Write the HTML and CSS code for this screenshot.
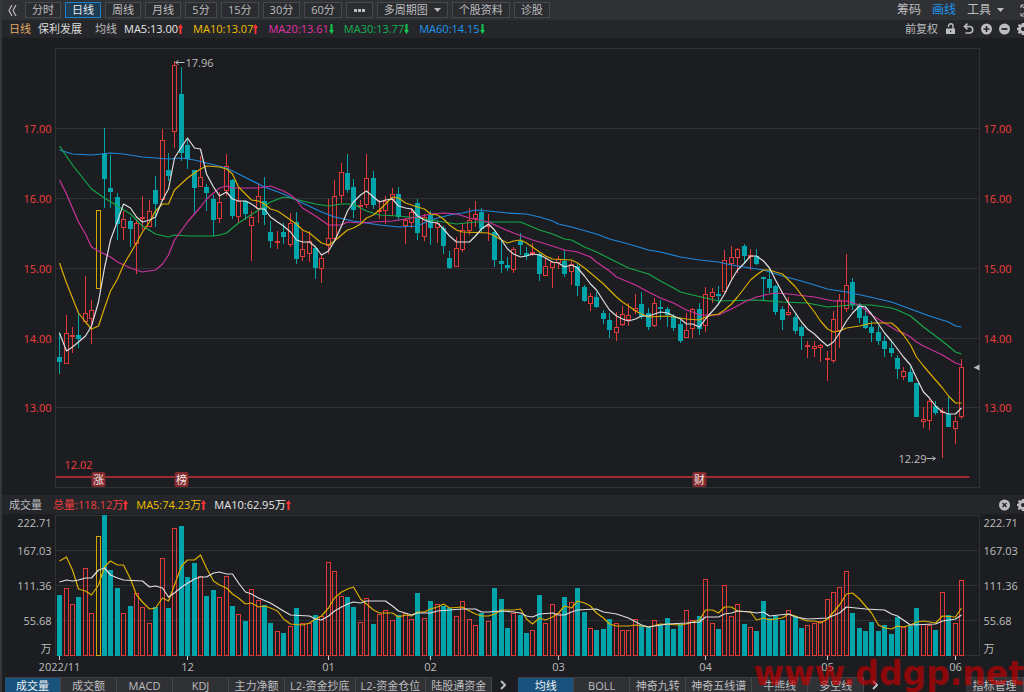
FILE: index.html
```html
<!DOCTYPE html>
<html lang="zh-CN">
<head>
    <meta charset="UTF-8">
    <meta name="viewport" content="width=device-width, initial-scale=1.0">
    <title>保利发展 日线</title>
    <link rel="stylesheet" href="styles.css">
</head>
<body>
    <svg class="sprite" aria-hidden="true">
        <symbol id="up" viewBox="0 0 5 10"><path d="M2.5 0L5 4H3.5V10H1.5V4H0z"/></symbol>
        <symbol id="down" viewBox="0 0 5 10"><path d="M2.5 10L5 6H3.5V0H1.5V6H0z"/></symbol>
        <symbol id="caret" viewBox="0 0 7 4"><path d="M0 0h7L3.5 4z"/></symbol>
        <symbol id="gear" viewBox="0 0 12 12"><path fill-rule="evenodd" d="M5 0h2l.4 1.6 1.1.5L10 1.200l1.200 1.300-.8 1.400.4 1.100L12 5v2l-1.400.4-.5 1.100.9 1.500-1.300 1.200-1.500-.8-.9.300L7 12H5l-.4-1.500-1.100-.4-1.500.8L.8 9.700l.8-1.400L1.300 7.300 0 7V5l1.500-.4.4-1L1 2.200 2.300.9l1.400.9.9-.3zM6 4a2 2 0 1 0 0 4 2 2 0 1 0 0-4z"/></symbol>
        <symbol id="next" viewBox="0 0 6 10"><path d="M1 1l4 4-4 4" fill="none" stroke="currentColor" stroke-width="2"/></symbol>
    </svg>

    <main class="app">
        <nav class="toolbar">
            <button class="plain" aria-label="收起"><svg width="9" height="11" viewBox="0 0 9 11"><path d="M4 0L1 5.500l3 5.500M8 0L5 5.500l3 5.500" fill="none" stroke="currentColor" stroke-width="1.200"/></svg></button>
            <button class="period">分时</button>
            <button class="period active">日线</button>
            <button class="period">周线</button>
            <button class="period">月线</button>
            <button class="period">5分</button>
            <button class="period">15分</button>
            <button class="period">30分</button>
            <button class="period">60分</button>
            <button class="period more" aria-label="更多"><svg width="13" height="3" viewBox="0 0 13 3"><path d="M1 0h3v3H1zM5 0h3v3H5zM9 0h3v3H9z"/></svg></button>
            <button class="period">多周期图 <svg class="caret" width="7" height="4"><use href="#caret"/></svg></button>
            <button class="period">个股资料</button>
            <button class="period">诊股</button>
            <div class="tools">
                <button class="plain">筹码</button>
                <button class="plain blue">画线</button>
                <button class="plain">工具 <svg class="caret" width="7" height="4"><use href="#caret"/></svg></button>
                <button class="plain" aria-label="全屏"><svg width="12" height="13" viewBox="0 0 12 13"><path d="M1 4V1h3M1 1l3 3M8 1h3v3M1 9v3h3M1 12l3-3M11 9v3H8" fill="none" stroke="currentColor"/></svg></button>
            </div>
        </nav>

        <header class="info">
            <span class="orange">日线</span>
            <span class="name">保利发展</span>
            <span class="label">均线</span>
            <span class="value white">MA5:13.00<svg class="arrow up"><use href="#up"/></svg></span>
            <span class="value yellow">MA10:13.07<svg class="arrow up"><use href="#up"/></svg></span>
            <span class="value magenta">MA20:13.61<svg class="arrow down"><use href="#down"/></svg></span>
            <span class="value green">MA30:13.77<svg class="arrow down"><use href="#down"/></svg></span>
            <span class="value blue">MA60:14.15<svg class="arrow down"><use href="#down"/></svg></span>
            <div class="actions">
                <button class="plain">前复权</button>
                <button class="plain" aria-label="锁定"><svg width="11" height="12" viewBox="0 0 11 12"><path d="M1 5.500h9V11H1z"/><path d="M3.500 4V3a2.200 2.200 0 0 1 4.500 0v3" fill="none" stroke="currentColor" stroke-width="1.400"/><path d="M5 7.500h1.200v1.500H5z" fill="#25262a"/></svg></button>
                <button class="plain" aria-label="撤销"><svg width="11" height="12" viewBox="0 0 11 12"><path d="M1.500 3.500H7a3.300 3.300 0 0 1 0 6.500H2.500M4.500 .7L1.500 3.500l3 2.800" fill="none" stroke="currentColor" stroke-width="1.600"/></svg></button>
                <button class="plain" aria-label="放大"><svg width="11" height="12" viewBox="0 0 11 12"><circle cx="5.500" cy="6" r="5.500"/><path d="M2.500 6h6M5.500 3v6" stroke="#25262a" stroke-width="1.600"/></svg></button>
                <button class="plain" aria-label="缩小"><svg width="11" height="12" viewBox="0 0 11 12"><circle cx="5.500" cy="6" r="5.500"/><path d="M2.500 6h6" stroke="#25262a" stroke-width="1.800"/></svg></button>
                <button class="plain" aria-label="设置"><svg width="12" height="12"><use href="#gear"/></svg></button>
            </div>
        </header>

        <svg id="price-chart" class="chart price-chart" role="img" aria-label="日线K线图"></svg>

        <header class="info volume-info">
            <span class="label">成交量</span>
            <span class="value red">总量:118.12万<svg class="arrow up"><use href="#up"/></svg></span>
            <span class="value yellow">MA5:74.23万<svg class="arrow up"><use href="#up"/></svg></span>
            <span class="value white">MA10:62.95万<svg class="arrow up"><use href="#up"/></svg></span>
            <div class="actions">
                <button class="plain" aria-label="关闭"><svg width="11" height="12" viewBox="0 0 11 12"><circle cx="5.500" cy="6" r="5.500"/><path d="M3.500 4l4 4M7.500 4l-4 4" stroke="#25262a" stroke-width="1.500"/></svg></button>
                <button class="plain" aria-label="设置"><svg width="12" height="12"><use href="#gear"/></svg></button>
            </div>
        </header>

        <svg id="volume-chart" class="chart volume-chart" role="img" aria-label="成交量"></svg>

        <footer class="tabs">
            <div class="tab-group">
                <button class="tab active">成交量</button>
                <button class="tab">成交额</button>
                <button class="tab">MACD</button>
                <button class="tab">KDJ</button>
                <button class="tab">主力净额</button>
                <button class="tab">L2-资金抄底</button>
                <button class="tab">L2-资金仓位</button>
                <button class="tab">陆股通资金</button>
            </div>
            <button class="plain next" aria-label="更多指标"><svg width="6" height="10"><use href="#next"/></svg></button>
            <div class="tab-group">
                <button class="tab active">均线</button>
                <button class="tab">BOLL</button>
                <button class="tab">神奇九转</button>
                <button class="tab">神奇五线谱</button>
                <button class="tab">牛熊线</button>
                <button class="tab">多空线</button>
            </div>
            <button class="plain next" aria-label="更多均线"><svg width="6" height="10"><use href="#next"/></svg></button>
            <button class="tab manage">指标管理</button>
        </footer>
        <div class="watermark">www.ddgp.net</div>
    </main>

    <script src="chart.js"></script>
</body>
</html>
```

FILE: styles.css
```css
* {
    box-sizing: border-box;
}

body {
    margin: 0;
    height: 100vh;
    overflow: hidden;
    background: #1c1d20;
    color: #bcbdbf;
    font-family: "Open Sans", "Noto Sans CJK SC", sans-serif;
    font-size: 11px;
    line-height: 16px;
}

button {
    font: inherit;
    color: inherit;
    background: none;
    border: none;
    padding: 0;
    white-space: nowrap;
    cursor: pointer;
}

svg {
    fill: currentColor;
}

.sprite {
    display: none;
}

.app {
    position: relative;
    height: 100%;
    overflow: hidden;
    border-left: 2px solid #36373a;
    display: flex;
    flex-direction: column;
}

.toolbar {
    display: flex;
    align-items: center;
    gap: 4px;
    height: 20px;
    padding-left: 6px;
    background: #303135;
    flex-shrink: 0;
}

.toolbar > .plain {
    width: 13px;
    display: flex;
}

.period {
    display: flex;
    align-items: center;
    justify-content: center;
    min-width: 32px;
    height: 16px;
    padding: 0 6px;
    line-height: 14px;
    border: 1px solid #47484b;
    background: #2b2c30;
}

.period.more {
    min-width: 27px;
}

.period.active {
    color: #e6e8ea;
    background: #1e3d54;
    border-color: #1c80c9;
}

.caret {
    margin-left: 6px;
}

.tools {
    display: flex;
    align-items: center;
    gap: 11px;
    margin-left: auto;
    margin-right: -8px;
    font-size: 12px;
}

.tools .plain {
    display: flex;
    align-items: center;
}

.tools .plain:last-child {
    margin-left: 5px;
}

.info {
    display: flex;
    align-items: center;
    gap: 7px;
    height: 18px;
    padding-left: 7px;
    background: #25262a;
    white-space: nowrap;
    flex-shrink: 0;
}

.name {
    color: #dcddde;
    margin-right: 6px;
}

.value + .value {
    margin-left: 3px;
}

.orange { color: #e0a868; }
.white { color: #e8e8e8; }
.yellow { color: #eec000; }
.magenta { color: #e032a6; }
.green { color: #12b450; }
.blue { color: #1d96ee; }
.red { color: #f03e3e; }

.arrow {
    width: 5px;
    height: 10px;
    vertical-align: -1px;
}

.arrow.up {
    color: #ff3434;
}

.arrow.down {
    color: #14c850;
}

.actions {
    display: flex;
    align-items: center;
    gap: 7px;
    margin-left: auto;
    margin-right: -5px;
}

.actions .plain {
    display: flex;
}

.volume-info {
    height: 19px;
}

.volume-info .label {
    margin-right: 4px;
}

.volume-info .value + .value {
    margin-left: 1px;
}

.chart {
    display: block;
    width: 100%;
    flex-shrink: 0;
}

.price-chart {
    height: 457px;
}

.volume-chart {
    height: 163px;
}

.frame {
    fill: none;
    stroke: #303135;
}

.grid {
    stroke: #303135;
}

.candle {
    stroke-width: 1;
    shape-rendering: crispEdges;
}

.candle.rise {
    fill: none;
    stroke: #e23a3a;
}

.candle.fall {
    fill: #00a5ab;
    stroke: #00a5ab;
}

.candle.mark {
    fill: none;
    stroke: #d3a900;
}

.average {
    fill: none;
    stroke-width: 1.2;
    stroke-linejoin: round;
}

.average.white { stroke: #dedede; }
.average.yellow { stroke: #d9ae00; }
.average.magenta { stroke: #cb329b; }
.average.green { stroke: #16a84a; }
.average.blue { stroke: #1f88dc; }

.chart text {
    fill: #bcbdbf;
}

.chart .price-label {
    fill: #f43e3e;
}

.leader {
    fill: none;
    stroke: #b4b5b7;
}

.event-line {
    stroke: #9c2d30;
    stroke-width: 2;
}

.event {
    fill: #842a2e;
}

.chart .event-text {
    fill: #f0e6e6;
}

.tick {
    stroke: #d0d0d0;
}

.tabs {
    display: flex;
    height: 18px;
    padding-left: 3px;
    flex-shrink: 0;
}

.tab-group {
    display: flex;
}

.tab {
    min-width: 56px;
    height: 18px;
    padding: 0 5px 2px;
    background: #303135;
    border-top: 1px solid #3d3e42;
    border-right: 1px solid #47484b;
}

.tab.active {
    color: #f0f2f4;
    background: #18527d;
}

.next {
    display: flex;
    justify-content: center;
    width: 26px;
    padding: 3px 4px 0 0;
}

.manage {
    width: 58px;
    margin-left: auto;
}

.watermark {
    position: absolute;
    right: 0;
    bottom: -1px;
    color: rgba(200, 0, 0, 0.66);
    font: bold 33px/38px "DejaVu Sans", sans-serif;
    pointer-events: none;
}
```

FILE: chart.js
```js
// One row per day: type (r = rise, f = fall, m = marked), high, body top, body bottom, low, volume top
const days = [
    ['f',332,357,362,374,595], ['r',315,333,364,364,588], ['r',327,335,337,353,604], ['f',314,335,339,348,597],
    ['r',276,313,322,322,568], ['r',300,310,319,344,613], ['m',210,210,289,289,536], ['f',128,154,179,208,515],
    ['f',155,188,192,208,570], ['f',193,197,224,240,588], ['r',211,219,228,240,613], ['f',217,221,229,247,606],
    ['r',220,223,244,274,593], ['r',196,217,219,230,607], ['r',200,211,227,227,623], ['f',176,190,204,227,607],
    ['r',129,140,200,200,558], ['f',153,170,176,181,608], ['r',61,65,132,148,528], ['f',67,94,153,161,526],
    ['f',138,145,159,169,577], ['f',170,170,188,215,563], ['r',156,177,187,187,576], ['f',184,187,193,211,596],
    ['f',195,199,220,236,590], ['r',192,202,219,223,597], ['r',154,166,191,196,576], ['f',179,180,216,219,606],
    ['r',188,201,217,223,614], ['f',200,201,214,220,621], ['r',211,217,226,261,589], ['r',183,196,209,223,600],
    ['f',177,201,215,225,605], ['f',221,232,241,248,623], ['r',231,241,243,249,631], ['f',223,232,237,244,633],
    ['r',213,223,245,247,626], ['f',212,222,259,264,608], ['r',231,249,257,261,623], ['r',231,241,254,262,623],
    ['f',246,248,268,279,615], ['r',254,258,269,283,616], ['r',199,238,246,254,562], ['r',180,196,239,240,571],
    ['r',163,172,196,203,596], ['f',154,173,190,193,597], ['f',179,187,210,218,607], ['r',200,205,207,223,622],
    ['r',154,178,205,208,598], ['f',171,178,205,209,624], ['r',200,210,212,219,614], ['r',196,201,211,224,610],
    ['r',188,194,200,216,620], ['f',187,194,217,220,615], ['r',218,220,226,244,613], ['r',208,212,223,228,619],
    ['f',199,203,233,240,593], ['r',214,217,237,241,618], ['f',211,215,228,245,601], ['r',221,223,228,243,604],
    ['f',226,228,246,254,606], ['f',251,258,268,269,608], ['r',237,248,267,267,616], ['r',223,230,250,252,601],
    ['r',208,220,231,235,619], ['r',201,214,219,227,625], ['f',208,212,229,233,613], ['r',214,225,227,241,621],
    ['f',230,232,260,267,588], ['f',240,261,264,273,599], ['f',257,265,268,271,628], ['r',247,249,270,273,613],
    ['f',233,241,245,255,615], ['f',247,253,256,260,633], ['r',243,252,254,256,630], ['f',253,254,274,281,595],
    ['r',258,266,276,276,623], ['r',261,262,268,288,604], ['r',256,259,263,269,613], ['f',250,261,274,277,597],
    ['r',261,264,272,285,602], ['f',264,266,286,296,588], ['f',285,287,301,302,612], ['r',293,296,304,311,628],
    ['f',292,297,307,308,630], ['f',310,313,319,324,629], ['f',313,320,330,338,619], ['r',312,327,333,341,623],
    ['r',306,314,325,326,630], ['r',303,315,320,326,630], ['r',294,308,311,314,619], ['f',292,304,317,319,626],
    ['f',308,313,327,330,627], ['r',298,303,326,327,620], ['f',300,307,309,320,625], ['f',307,309,315,327,618],
    ['f',314,317,328,331,629], ['f',320,324,341,343,624], ['r',313,330,338,338,610], ['r',308,309,329,338,620],
    ['f',303,309,329,335,616], ['r',287,294,326,332,579], ['r',288,292,297,303,623], ['f',286,294,296,303,629],
    ['r',250,260,292,292,585], ['r',246,257,264,279,616], ['r',248,249,258,273,604], ['f',244,246,256,264,624],
    ['r',249,255,257,270,627], ['f',249,256,264,265,631], ['f',277,277,279,301,601], ['f',268,279,288,293,618],
    ['f',285,286,312,315,616], ['f',306,309,320,330,620], ['r',297,312,315,316,610], ['f',313,317,331,334,617],
    ['f',325,327,336,350,628], ['r',341,345,347,358,625], ['r',341,346,349,357,623], ['r',344,345,348,362,621],
    ['r',351,358,360,381,599], ['r',311,319,361,363,592], ['r',294,300,331,348,587], ['r',254,285,309,312,571],
    ['f',278,282,305,310,613], ['f',303,304,318,323,628], ['f',306,316,328,329,631], ['f',321,327,333,342,622],
    ['f',326,332,341,345,631], ['f',336,341,349,357,625], ['f',341,348,353,357,634], ['f',355,358,369,379,617],
    ['r',367,371,377,380,627], ['f',366,372,382,382,626], ['f',383,383,417,417,608], ['r',407,419,422,428,624],
    ['r',399,401,421,430,625], ['f',401,406,413,415,630], ['r',408,411,413,458,592], ['f',397,414,427,427,615],
    ['r',416,421,429,444,623], ['r',359,367,417,419,580]
];

// Averages as "day:y" points
const priceAverages = {
    blue: '0:150 2:154 5:155 8:153 10:154 13:157 17:159 19:158 21:160 23:163 26:168 28:174 32:187 35:194 38:203 41:212 43:217 46:221 50:225 53:227 56:226 58:220 61:215 63:213 65:210 67:211 70:213 73:214 75:217 77:221 78:224 80:227 84:234 86:239 89:244 92:250 94:252 97:257 100:260 103:262 105:265 108:268 110:270 113:276 116:281 120:289 123:292 126:296 130:302 133:309 136:316 139:322 140:326 141:327',
    green: '0:146 2:165 5:189 7:198 9:206 11:214 13:226 15:234 17:237 18:235 20:236 24:236 25:235 26:233 28:223 31:210 33:202 35:197 36:198 38:201 40:204 42:206 44:204 46:204 47:208 48:211 50:215 53:216 56:218 60:222 62:224 65:222 72:222 74:227 75:230 77:234 79:239 80:240 82:247 84:252 87:262 89:268 92:274 94:281 96:288 97:292 99:295 101:298 103:301 109:300 113:302 117:303 120:307 124:305 127:305 130:308 131:310 133:316 135:327 137:336 139:346 140:352 141:354',
    magenta: '0:180 1:194 2:208 3:222 4:234 5:247 6:251 8:257 9:262 11:268 13:272 15:270 16:264 17:255 18:240 20:222 22:207 23:199 25:188 26:186 27:188 31:188 33:186 35:191 36:195 37:200 38:208 40:216 42:225 44:225 45:222 47:223 49:222 52:221 54:219 56:217 58:214 60:213 62:214 64:218 67:222 69:228 71:233 74:240 75:242 78:248 79:250 81:252 83:257 84:262 86:271 87:277 90:285 92:292 94:298 96:303 98:310 99:312 100:315 103:315 105:309 107:302 109:297 111:294 112:293 114:294 118:297 121:301 123:301 125:305 127:315 129:323 131:331 132:333 133:337 134:342 135:346 138:355 140:363 141:365',
    yellow: '0:263 1:283 2:298 3:313 4:322 5:329 6:326 7:308 8:291 9:279 10:265 12:243 13:232 14:222 15:211 16:204 17:204 18:190 20:178 22:169 23:166 25:167 26:169 27:174 28:187 29:194 30:200 31:201 32:204 33:209 34:211 35:215 36:220 37:224 38:230 39:233 40:238 41:243 42:245 43:241 44:235 45:230 46:228 47:224 48:218 49:215 50:210 51:204 52:197 53:198 54:203 55:205 56:207 57:209 58:214 59:215 60:219 61:225 62:230 63:232 67:233 68:236 69:240 70:243 71:241 72:240 73:243 74:247 75:252 76:256 77:259 80:260 81:263 82:268 83:273 84:278 85:284 86:290 87:297 88:302 89:306 90:311 91:314 92:317 95:316 98:319 100:320 101:317 102:315 103:314 104:310 105:304 106:297 107:288 108:280 109:275 110:270 111:270 112:272 113:274 114:280 115:287 116:295 117:303 118:312 119:321 120:329 121:332 122:331 123:328 125:326 127:323 130:323 131:328 132:335 133:345 134:357 135:366 136:373 138:388 139:396 140:403 141:403',
    white: '0:333 1:351 2:347 3:342 4:336 5:326 6:302 7:268 8:240 9:221 10:204 11:208 12:217 13:222 14:220 15:217 16:200 17:189 18:158 19:147 20:138 21:148 22:149 23:174 24:187 25:196 26:192 27:199 28:201 29:201 30:204 31:209 32:209 33:217 34:222 35:226 36:232 37:240 38:242 39:242 40:247 41:255 42:251 43:241 44:226 45:211 46:202 47:195 48:191 49:197 50:202 51:200 52:199 53:206 54:208 55:209 56:216 57:220 58:222 59:223 60:229 61:236 62:242 64:242 65:236 66:229 67:224 68:230 69:240 70:249 71:254 72:257 73:256 74:254 75:255 76:258 77:262 78:263 79:267 80:265 81:268 82:276 83:284 84:290 85:301 86:310 87:316 88:319 89:321 90:319 91:316 92:316 93:314 94:312 95:313 96:316 97:319 98:324 99:324 100:327 101:319 102:311 103:304 104:294 105:280 106:270 107:263 108:256 109:256 110:261 111:268 112:280 113:293 114:303 115:313 116:322 117:329 118:334 119:340 120:346 121:342 122:333 123:321 124:313 125:306 126:307 127:314 128:324 129:333 130:341 131:349 132:357 133:365 134:378 135:392 136:398 137:406 138:412 139:414 140:414 141:408'
};

const volumeAverages = {
    yellow: '0:561 1:557 2:570 3:589 4:591 5:595 6:585 7:567 8:561 9:565 10:565 11:579 12:595 13:602 14:609 15:608 16:598 17:601 18:585 19:566 20:560 21:560 22:555 23:568 24:581 25:585 26:588 27:594 28:598 29:604 30:603 31:607 32:606 33:608 34:611 35:619 36:624 38:625 39:623 40:619 41:616 42:608 43:598 44:592 45:589 46:587 47:599 48:604 49:610 50:613 52:613 53:617 54:615 55:616 56:612 57:612 58:609 59:607 60:604 61:608 63:607 64:611 65:614 66:616 67:616 68:614 69:610 71:610 72:609 73:619 74:624 75:618 76:620 77:617 78:613 79:606 80:608 81:601 82:603 83:606 84:613 85:618 86:624 87:626 89:626 90:625 92:627 94:624 97:625 98:624 99:622 100:620 101:610 102:610 103:613 104:607 105:607 106:611 108:612 109:620 110:618 111:620 112:619 113:618 114:614 115:616 116:619 117:621 118:621 119:623 120:619 121:612 122:605 123:594 124:593 125:599 126:606 127:613 128:625 129:628 130:629 131:626 132:627 133:625 134:622 135:621 137:623 138:616 140:617 141:608',
    white: '0:582 1:580 2:581 3:580 4:578 5:578 6:570 7:568 8:575 9:578 10:580 13:581 14:587 15:586 16:588 17:597 18:593 19:587 21:579 22:577 23:577 24:573 25:572 26:574 27:574 28:583 29:592 30:594 31:598 33:603 35:611 36:615 39:616 40:619 41:620 42:616 43:611 44:607 45:604 46:602 47:603 48:601 51:601 52:606 53:611 55:615 56:613 58:613 59:611 61:610 63:609 65:609 66:612 67:612 69:611 71:612 72:613 73:616 74:617 75:614 77:613 78:615 79:615 80:612 81:610 84:609 85:612 87:614 89:618 91:625 92:627 95:624 98:623 100:622 101:617 103:617 104:614 105:613 106:611 108:612 109:613 110:612 111:616 114:614 115:617 117:619 120:618 122:613 123:607 126:609 129:610 130:614 131:616 133:625 137:624 138:621 140:619 141:615'
};

const LEFT = 53.5;
const RIGHT_GUTTER = 44.5;
const classes = { r: 'rise', f: 'fall', m: 'mark' };

function line(x1, y1, x2, y2, cls) {
    return `<path class="${cls}" d="M${x1} ${y1}L${x2} ${y2}"/>`;
}

function text(x, y, str, cls = '', anchor = 'start') {
    return `<text class="${cls}" x="${x}" y="${y}" text-anchor="${anchor}">${str}</text>`;
}

function drawAverages(averages, dayX) {
    return Object.entries(averages).map(([color, points]) => {
        const path = points.split(' ').map(p => {
            const [i, y] = p.split(':');
            return `${dayX(+i)},${y}`;
        }).join(' ');
        return `<polyline class="average ${color}" points="${path}"/>`;
    }).join('');
}

function drawPrice(right, dayX) {
    let out = `<rect class="frame" x="${LEFT}" y="48.5" width="${right - LEFT}" height="439"/>`;
    [128.5, 198.5, 268.5, 338.5, 407.5].forEach((y, i) => {
        const label = (17 - i).toFixed(2);
        out += line(LEFT, y, right, y, 'grid');
        out += text(LEFT - 4, y + 4, label, 'price-label', 'end');
        out += text(right + 4, y + 4, label, 'price-label');
    });

    // Upper and lower wicks, then the body
    days.forEach(([type, high, top, bottom, low], i) => {
        const x = dayX(i);
        out += `<path class="candle ${classes[type]}" d="M${x} ${high}V${top}M${x} ${bottom}V${low}M${x - 2} ${top + .5}h4V${bottom - .5}h-4z"/>`;
    });
    out += drawAverages(priceAverages, dayX);

    const high = dayX(18);
    out += `<path class="leader" d="M${high + 10} 62.5h-9m3 -2l-3 2l3 2"/>` + text(high + 11, 67, '17.96');
    const low = dayX(138);
    out += `<path class="leader" d="M${low - 16} 458.5h9m-3 -2l3 2l-3 2"/>` + text(low - 16, 463, '12.29', '', 'end');
    out += `<path fill="#b4b5b7" d="M${right - 6} 367.500l6 -3v6z"/>`;

    out += line(LEFT, 477, right - 10, 477, 'event-line') + text(LEFT + 9, 469, '12.02', 'price-label');
    [[6, '涨'], [19, '榜'], [100, '财']].forEach(([i, str]) => {
        const x = dayX(i);
        out += `<rect class="event" x="${x - 7}" y="472" width="14" height="15" rx="2"/>` + text(x, 484, str, 'event-text', 'middle');
    });
    return out;
}

function drawVolume(right, dayX) {
    let out = `<rect class="frame" x="${LEFT}" y="515.5" width="${right - LEFT}" height="140"/>`;
    [550.5, 585.5, 620.5].forEach(y => {
        out += line(LEFT, y, right, y, 'grid');
    });
    [[527, '222.71'], [555, '167.03'], [590, '111.36'], [625, '55.68'], [653, '万']].forEach(([y, str]) => {
        out += text(LEFT - 4, y, str, '', 'end') + text(right + 4, y, str);
    });
    days.forEach(([type, , , , , top], i) => {
        out += `<rect class="candle ${classes[type]}" x="${dayX(i) - 2}" y="${top + .5}" width="4" height="${655 - top}"/>`;
    });
    out += drawAverages(volumeAverages, dayX);
    [[0, '2022/11'], [20, '12'], [42, '01'], [58, '02'], [78, '03'], [101, '04'], [120, '05'], [140, '06']].forEach(([i, str]) => {
        out += line(dayX(i), 656, dayX(i), 660, 'tick') + text(dayX(i), 671, str, '', 'middle');
    });
    return out;
}

function render(id, top, draw) {
    const svg = document.getElementById(id);
    const width = svg.clientWidth;
    const right = width - RIGHT_GUTTER;
    const step = (right - LEFT) / 144.5;
    const dayX = i => Math.floor(LEFT + 4.3 + i * step) + .5;
    svg.setAttribute('viewBox', `0 ${top} ${width} ${svg.clientHeight}`);
    svg.innerHTML = draw(right, dayX);
}

function renderAll() {
    render('price-chart', 38, drawPrice);
    render('volume-chart', 514, drawVolume);
}

window.addEventListener('resize', renderAll);
renderAll();
```
